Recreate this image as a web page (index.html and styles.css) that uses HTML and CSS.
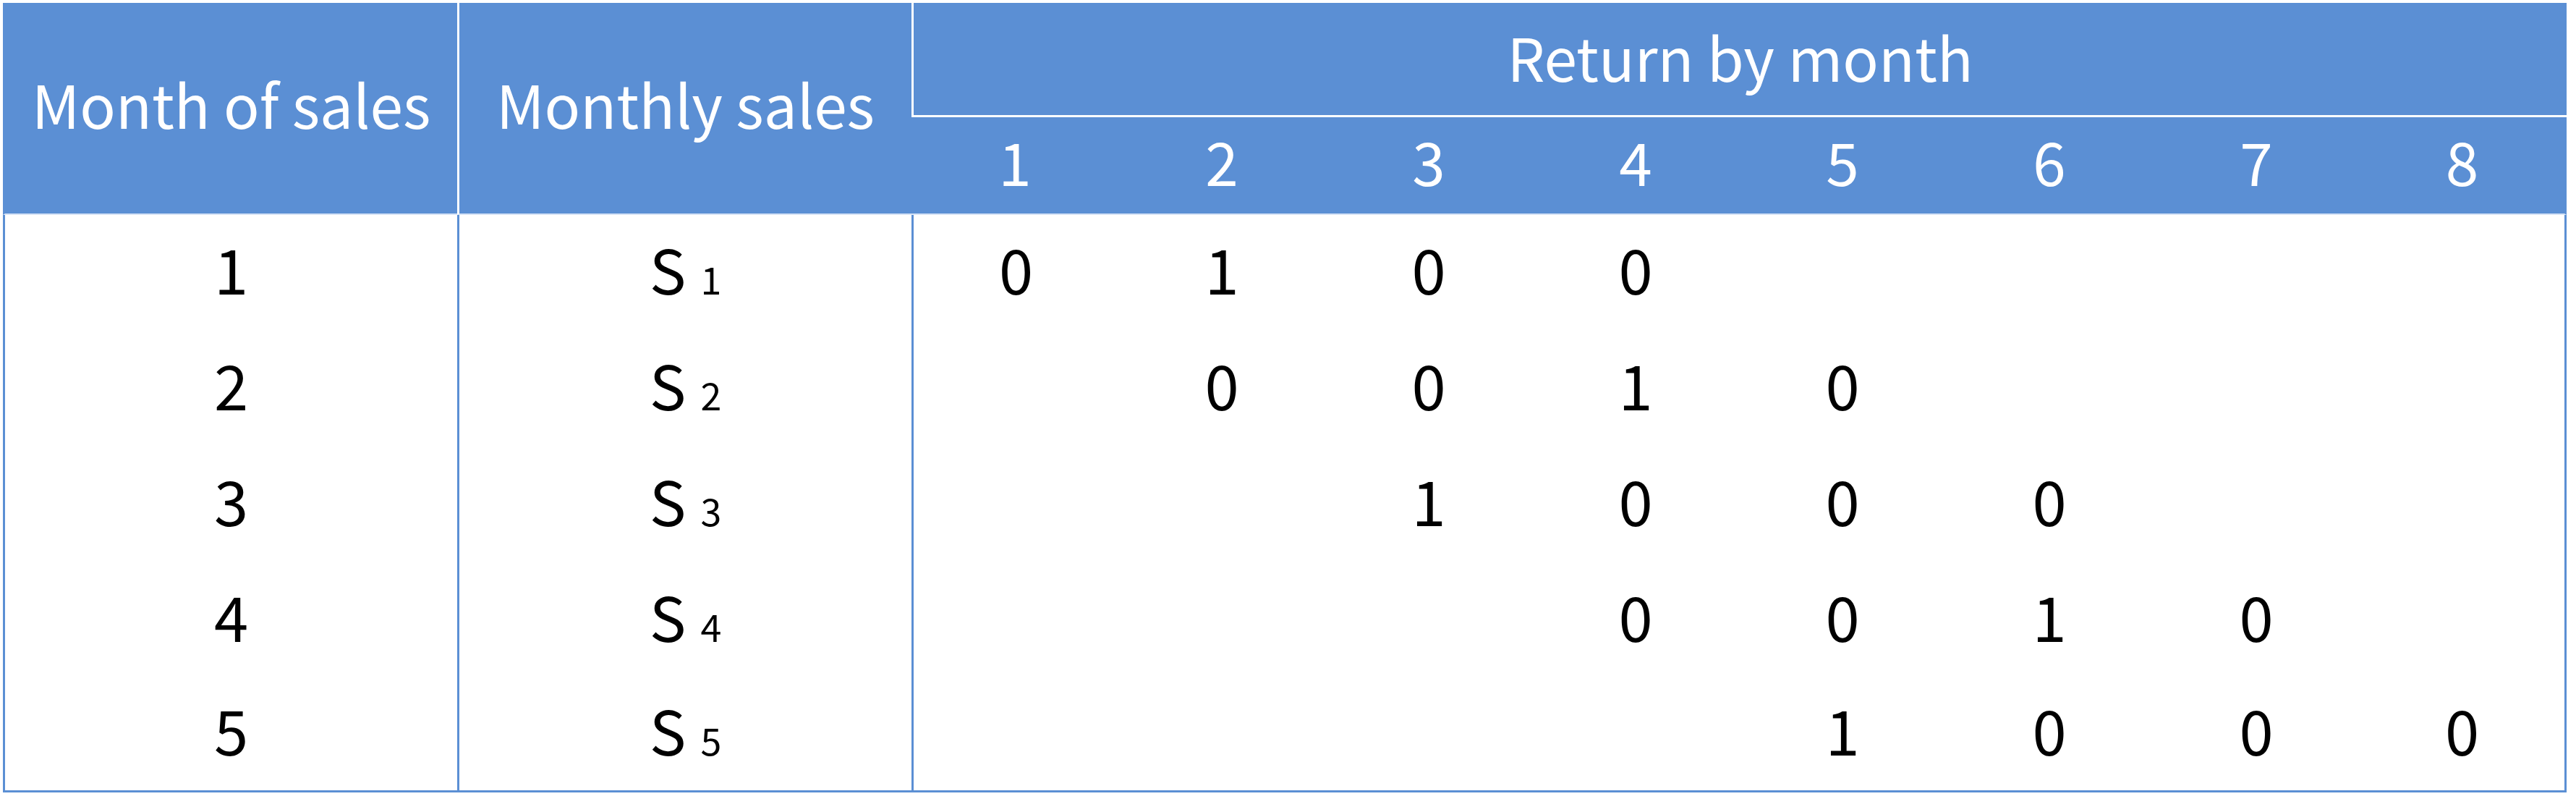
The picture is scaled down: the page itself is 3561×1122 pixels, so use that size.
FILE: index.html
```html
<!DOCTYPE html>
<html lang="en">
<head>
<meta charset="utf-8">
<title>Return by month</title>
<link rel="stylesheet" href="styles.css">
</head>
<body>
<table class="returns">
  <colgroup>
    <col class="c-month">
    <col class="c-sales">
    <col class="c-m"><col class="c-m"><col class="c-m"><col class="c-m">
    <col class="c-m"><col class="c-m"><col class="c-m"><col class="c-m">
  </colgroup>
  <thead>
    <tr class="h-top">
      <th rowspan="2" class="h-first h-side">Month of sales</th>
      <th rowspan="2" class="h-div h-side">Monthly sales</th>
      <th colspan="8" class="h-div h-group">Return by month</th>
    </tr>
    <tr class="h-sub">
      <th class="h-num">1</th><th class="h-num">2</th><th class="h-num">3</th><th class="h-num">4</th>
      <th class="h-num">5</th><th class="h-num">6</th><th class="h-num">7</th><th class="h-num h-num-last">8</th>
    </tr>
  </thead>
  <tbody>
    <tr>
      <td class="b-first">1</td><td class="b-div">S<span class="sub">1</span></td>
      <td class="b-div">0</td><td>1</td><td>0</td><td>0</td><td></td><td></td><td></td><td class="b-last"></td>
    </tr>
    <tr>
      <td class="b-first">2</td><td class="b-div">S<span class="sub">2</span></td>
      <td class="b-div"></td><td>0</td><td>0</td><td>1</td><td>0</td><td></td><td></td><td class="b-last"></td>
    </tr>
    <tr>
      <td class="b-first">3</td><td class="b-div">S<span class="sub">3</span></td>
      <td class="b-div"></td><td></td><td>1</td><td>0</td><td>0</td><td>0</td><td></td><td class="b-last"></td>
    </tr>
    <tr>
      <td class="b-first">4</td><td class="b-div">S<span class="sub">4</span></td>
      <td class="b-div"></td><td></td><td></td><td>0</td><td>0</td><td>1</td><td>0</td><td class="b-last"></td>
    </tr>
    <tr class="r-last">
      <td class="b-first">5</td><td class="b-div">S<span class="sub">5</span></td>
      <td class="b-div"></td><td></td><td></td><td></td><td>1</td><td>0</td><td>0</td><td class="b-last">0</td>
    </tr>
  </tbody>
</table>
</body>
</html>
```

FILE: styles.css
```css
html, body {
  margin: 0;
  padding: 0;
  background: #ffffff;
}

body {
  padding: 4px 0 0 4px;
  font-family: "Noto Sans CJK SC", "Noto Sans", sans-serif;
}

.returns {
  border-collapse: separate;
  border-spacing: 0;
  table-layout: fixed;
  width: 3544px;
}

.c-month { width: 628px; }
.c-sales { width: 628px; }
.c-m { width: 286px; }

.returns th,
.returns td {
  padding: 0;
  text-align: center;
  vertical-align: middle;
  line-height: 1;
  white-space: nowrap;
  box-sizing: border-box;
}

.returns th {
  background: #5b8fd4;
  color: #ffffff;
  font-weight: 400;
  font-size: 82px;
  border-bottom: 2px solid #d6e3f5;
}

.h-top { height: 158px; }
.h-sub { height: 135px; }

.returns th.h-side {
  padding-bottom: 13px;
}

.h-first {
  border-left: 3px solid #5b8fd4;
}

.h-div {
  border-left: 3px solid #ffffff;
}

.returns th.h-group {
  border-bottom: 3px solid #ffffff;
  padding-bottom: 8px;
}

.returns th.h-num {
  padding-bottom: 13px;
}

.h-num-last {
  border-right: 3px solid #5b8fd4;
}

.returns td {
  font-size: 85px;
  color: #000000;
  height: 160px;
  padding-bottom: 16px;
}

.b-first {
  border-left: 3px solid #5b8fd4;
}

.b-div {
  border-left: 3px solid #5b8fd4;
}

.b-last {
  border-right: 3px solid #5b8fd4;
}

.r-last td {
  border-bottom: 3px solid #5b8fd4;
  height: 158px;
}

.sub {
  font-size: 52px;
  margin-left: 20px;
}
```
